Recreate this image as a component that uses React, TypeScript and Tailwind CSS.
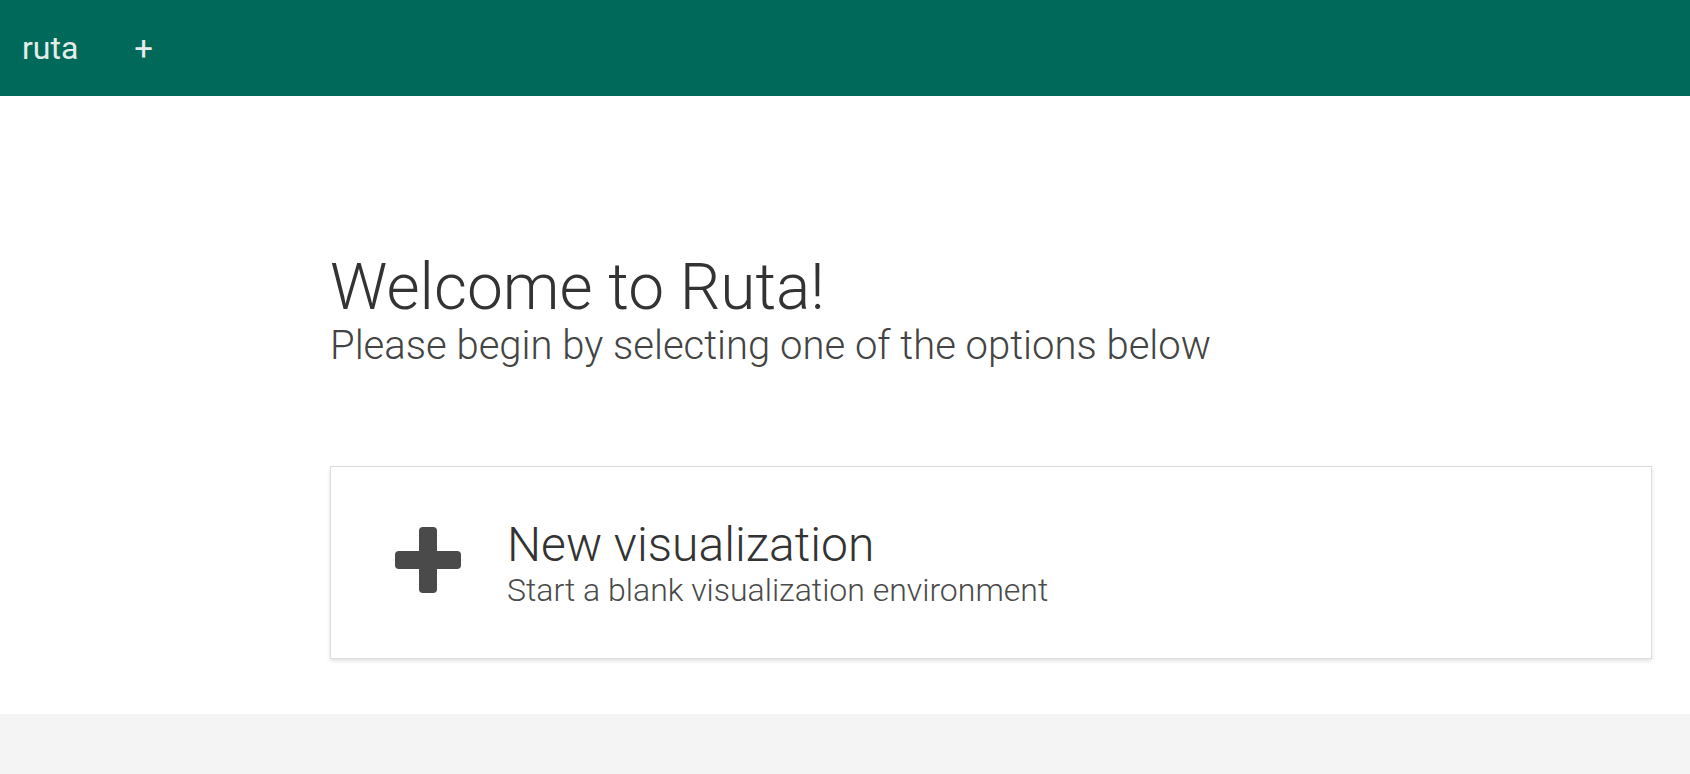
const font = { fontFamily: 'Roboto, "Liberation Sans", sans-serif' };

function PlusMark() {
  return (
    <svg width="66" height="66" viewBox="0 0 66 66" aria-hidden="true" className="mb-[6px] shrink-0">
      <rect x="24" y="0" width="18" height="66" rx="4" fill="#4a4a4a" />
      <rect x="0" y="24" width="66" height="18" rx="4" fill="#4a4a4a" />
    </svg>
  );
}

export default function App() {
  return (
    <div className="flex min-h-screen flex-col bg-white" style={font}>
      <header className="flex h-[96px] items-center bg-[#00695a] px-[22px] text-[#e6ece9]">
        <span className="text-[32px] font-normal leading-none">ruta</span>
        <button className="ml-[56px] text-[33px] font-normal leading-none">+</button>
      </header>

      <main className="flex flex-col pl-[330px] pr-[38px] pt-[160px]">
        <h1 className="text-[64px] font-light leading-[64px] text-[#333]">Welcome to Ruta!</h1>
        <p className="mt-[2px] text-[40px] font-light leading-[48px] text-[#444]">
          Please begin by selecting one of the options below
        </p>

        <button className="mt-[96px] flex h-[193px] items-center border border-[#dcdcdc] bg-white pl-[64px] text-left shadow-[0_2px_4px_rgba(0,0,0,0.12)]">
          <PlusMark />
          <div className="ml-[46px] flex flex-col">
            <span className="text-[48px] font-light leading-[54px] text-[#333]">New visualization</span>
            <span className="text-[32px] font-light leading-[36px] text-[#4a4a4a]">
              Start a blank visualization environment
            </span>
          </div>
        </button>
      </main>

      <footer className="mt-[55px] h-[60px] bg-[#f4f4f4]" />
    </div>
  );
}
